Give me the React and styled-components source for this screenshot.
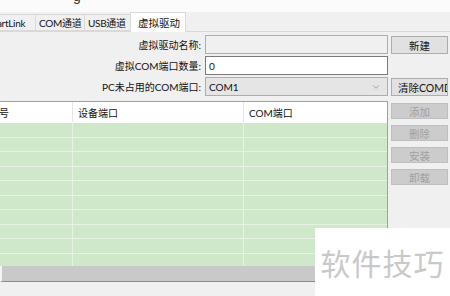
import React from 'react';
import styled, { createGlobalStyle } from 'styled-components';
import { ChevronDown } from 'lucide-react';

const GlobalStyle = createGlobalStyle`
  html, body {
    margin: 0;
    padding: 0;
    background: #f0f0f0;
  }
  body {
    font-family: Lato, "Noto Sans CJK SC", sans-serif;
    font-size: 10px;
    color: #111;
  }
`;

const Window = styled.div`
  position: relative;
  width: 450px;
  height: 296px;
  overflow: hidden;
  background: #f0f0f0;
  display: flex;
  flex-direction: column;
`;

const TitleBar = styled.div`
  height: 12px;
  background: #fbfbfb;
  overflow: hidden;
  flex: none;
`;

const TitleTail = styled.span`
  display: block;
  margin: -11px 0 0 73px;
  font-family: "Liberation Sans", sans-serif;
  font-size: 14px;
  line-height: 14px;
  color: #333;
`;

const TabStrip = styled.div`
  display: flex;
  align-items: flex-end;
  height: 19px;
  margin-left: -19px;
  border-bottom: 1px solid #d9d9d9;
  flex: none;
`;

const Tab = styled.div`
  box-sizing: border-box;
  width: ${p => p.$w}px;
  height: ${p => (p.$active ? 20 : 17)}px;
  margin-left: -1px;
  margin-bottom: ${p => (p.$active ? -1 : 0)}px;
  padding-left: ${p => (p.$active ? 7 : 3)}px;
  display: flex;
  align-items: center;
  border: 1px solid #d9d9d9;
  border-bottom: ${p => (p.$active ? 'none' : '1px solid #d9d9d9')};
  background: ${p => (p.$active ? '#ffffff' : '#f0f0f0')};
  font-size: ${p => (p.$active ? 10.5 : 10)}px;
  letter-spacing: ${p => (p.$active ? 0 : -0.3)}px;
  white-space: nowrap;
  overflow: hidden;
`;

const Body = styled.div`
  display: grid;
  grid-template-columns: 388px 57px;
  column-gap: 3px;
  padding-top: 3px;
`;

const Form = styled.div`
  display: grid;
  grid-template-columns: 201px 183px;
  column-gap: 4px;
  row-gap: 2px;
  grid-auto-rows: 19px;
`;

const Label = styled.div`
  display: flex;
  align-items: center;
  justify-content: flex-end;
  white-space: nowrap;
`;

const Field = styled.div`
  box-sizing: border-box;
  display: flex;
  align-items: center;
  justify-content: space-between;
  padding: 0 6px 0 3px;
  border: 1px solid ${p => (p.$kind === 'white' ? '#7a7a7a' : '#adadad')};
  background: ${p =>
    p.$kind === 'white' ? '#ffffff' : p.$kind === 'combo' ? '#e5e5e5' : '#f0f0f0'};
`;

const SideColumn = styled.div`
  display: grid;
  grid-auto-rows: 19px;
  row-gap: 2px;
  padding-top: 1px;
`;

const Button = styled.div`
  box-sizing: border-box;
  height: ${p => p.$h || 18}px;
  display: flex;
  align-items: center;
  border: 1px solid ${p => (p.$disabled ? '#bfbfbf' : '#adadad')};
  background: ${p => (p.$disabled ? '#cccccc' : '#e1e1e1')};
  color: ${p => (p.$disabled ? '#a0a0a0' : '#111')};
  white-space: nowrap;
  overflow: hidden;
  font-size: 10.5px;
  justify-content: ${p => (p.$left ? 'flex-start' : 'center')};
  padding-left: ${p => (p.$left ? 6 : 0)}px;
`;

const Spacer = styled.div``;

const Lower = styled.div`
  display: grid;
  grid-template-columns: 388px 57px;
  column-gap: 3px;
  margin-top: 4px;
`;

const Table = styled.div`
  box-sizing: border-box;
  height: 181px;
  margin-left: -14px;
  width: 402px;
  border-top: 1px solid #a0a0a0;
  border-right: 1px solid #a0a0a0;
  display: flex;
  flex-direction: column;
  overflow: hidden;
`;

const Row = styled.div`
  box-sizing: border-box;
  display: grid;
  grid-template-columns: 86px 171px 1fr;
  flex: none;
  height: ${p => (p.$head ? 21 : 14.5)}px;
  background: ${p => (p.$head ? '#ffffff' : '#cfe8c9')};
  border-bottom: 1px solid ${p => (p.$head ? '#ffffff' : '#e6f2e2')};
`;

const Cell = styled.div`
  display: flex;
  align-items: center;
  padding-left: ${p => (p.$first ? 3 : 5)}px;
  border-left: ${p => (p.$first ? 'none' : `1px solid ${p.$head ? '#e5e5e5' : '#e6f2e2'}`)};
  white-space: nowrap;
`;

const Rows = styled.div`
  flex: 1;
  overflow: hidden;
`;

const HScroll = styled.div`
  box-sizing: border-box;
  flex: none;
  height: 16px;
  margin-left: 14px;
  background: #c9c9c9;
  border-left: 2px solid #f4f4f4;
  border-bottom: 1px solid #8c8c8c;
`;

const ActionColumn = styled.div`
  display: flex;
  flex-direction: column;
  gap: 6px;
  padding-top: 2px;
`;

const Watermark = styled.div`
  position: absolute;
  left: 315px;
  top: 228px;
  width: 135px;
  height: 68px;
  background: #ffffff;
  display: flex;
  align-items: center;
  justify-content: center;
  color: #c9c9c9;
  font-size: 30px;
  letter-spacing: 1px;
  font-family: "Noto Sans CJK SC", sans-serif;
`;

const rows = Array.from({ length: 11 });

export default function App() {
  return (
    <Window>
      <GlobalStyle />
      <TitleBar>
        <TitleTail>g</TitleTail>
      </TitleBar>

      <TabStrip>
        <Tab $w={56}>SmartLink</Tab>
        <Tab $w={50}>COM通道</Tab>
        <Tab $w={47}>USB通道</Tab>
        <Tab $w={56} $active>虚拟驱动</Tab>
      </TabStrip>

      <Body>
        <Form>
          <Label>虚拟驱动名称:</Label>
          <Field />
          <Label>虚拟COM端口数量:</Label>
          <Field $kind="white">0</Field>
          <Label>PC未占用的COM端口:</Label>
          <Field $kind="combo">
            COM1
            <ChevronDown size={10} color="#7a7a7a" strokeWidth={1.5} />
          </Field>
        </Form>
        <SideColumn>
          <Button>新建</Button>
          <Spacer />
          <Button $left>清除COMD</Button>
        </SideColumn>
      </Body>

      <Lower>
        <Table>
          <Row $head>
            <Cell $first $head>序号</Cell>
            <Cell $head>设备端口</Cell>
            <Cell $head>COM端口</Cell>
          </Row>
          <Rows>
            {rows.map((_, i) => (
              <Row key={i}>
                <Cell $first />
                <Cell />
                <Cell />
              </Row>
            ))}
          </Rows>
          <HScroll />
        </Table>
        <ActionColumn>
          <Button $disabled $h={16}>添加</Button>
          <Button $disabled $h={16}>删除</Button>
          <Button $disabled $h={16}>安装</Button>
          <Button $disabled $h={16}>卸载</Button>
        </ActionColumn>
      </Lower>

      <Watermark>软件技巧</Watermark>
    </Window>
  );
}
